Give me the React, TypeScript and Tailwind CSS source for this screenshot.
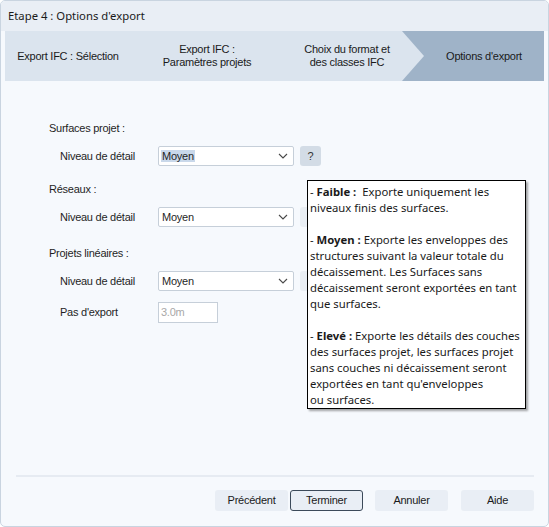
import React from "react";

const sans = "font-['Liberation_Sans',Arial,sans-serif] text-[11px] tracking-[-0.25px]";
const ui = "font-['Noto_Sans','Open_Sans',sans-serif] text-[11.3px] tracking-normal";

const Chevron: React.FC = () => (
    <svg width="10" height="6" viewBox="0 0 10 6" className="shrink-0">
        <path d="M1 1l4 4 4-4" fill="none" stroke="#4a4a4a" strokeWidth="1.1" />
    </svg>
);

const DetailRow: React.FC<{ highlighted?: boolean; faded?: boolean }> = ({ highlighted, faded }) => (
    <div className="flex items-center h-[20px] pl-[59px]">
        <span className="w-[98px] text-[#1f1f1f]">Niveau de détail</span>
        <div className="w-[136px] h-[20px] bg-white border border-[#c6cfd9] rounded-[2px] flex items-center pl-[2px] pr-[5px]">
            <span className={`flex-1 text-[#1f1f1f] ${highlighted ? "" : "pl-[1px]"}`}>
                {highlighted ? <span className="bg-[#c9d8ea] px-[1px]">Moyen</span> : "Moyen"}
            </span>
            <Chevron />
        </div>
        {/* Help button (hidden under the tooltip on the lower rows) */}
        <div
            className={`ml-[6px] w-[21px] h-[20px] rounded-[3px] flex items-center justify-center ${
                faded ? "bg-[#e9eef4]" : "bg-[#d3dce6] text-[#333]"
            }`}
        >
            {!faded && "?"}
        </div>
    </div>
);

export default function App() {
    return (
        <div className={`relative w-[549px] h-[527px] bg-[#f6f9fd] border border-[#c9d4e0] rounded-[5px] flex flex-col overflow-hidden ${sans}`}>
            {/* Title */}
            <div className={`h-[30px] shrink-0 bg-[#e9eef5] flex items-center pl-[7px] pt-[1px] text-[#1a1a1a] ${ui}`}>
                Etape 4 : Options d'export
            </div>

            {/* Wizard steps */}
            <div className="mx-[4px] h-[50px] shrink-0 bg-[#9fb3c8] flex text-[#1a1a1a] leading-[13px]">
                <div className="w-[419px] h-full bg-[#dbe4ee] flex items-center [clip-path:polygon(0_0,calc(100%-22px)_0,100%_50%,calc(100%-22px)_100%,0_100%)]">
                    <div className="w-[126px] text-center">Export IFC : Sélection</div>
                    <div className="w-[152px] text-center">
                        Export IFC :<br />Paramètres projets
                    </div>
                    <div className="w-[128px] text-center">
                        Choix du format et<br />des classes IFC
                    </div>
                </div>
                <div className="flex-1 flex items-center justify-center">Options d'export</div>
            </div>

            {/* Body */}
            <div className="flex-1 text-[#1f1f1f]">
                <div className="mt-[39px] pl-[48px] leading-[16px]">Surfaces projet :</div>
                <div className="mt-[10px]">
                    <DetailRow highlighted />
                </div>
                <div className="mt-[15px] pl-[48px] leading-[16px]">Réseaux :</div>
                <div className="mt-[10px]">
                    <DetailRow faded />
                </div>
                <div className="mt-[18px] pl-[48px] leading-[16px]">Projets linéaires :</div>
                <div className="mt-[10px]">
                    <DetailRow faded />
                </div>
                <div className="mt-[11px] flex items-center h-[21px] pl-[59px]">
                    <span className="w-[98px]">Pas d'export</span>
                    <div className="w-[60px] h-[21px] bg-white border border-[#c6cfd9] flex items-center pl-[2px] text-[#a8a8a8]">
                        3.0m
                    </div>
                </div>
            </div>

            {/* Footer */}
            <div className="shrink-0 pb-[15px]">
                <div className="ml-[15px] w-[518px] h-[2px] bg-[#e6ebf2]" />
                <div className="mt-[13px] flex justify-end pr-[14px] text-[#1a1a1a]">
                    <button className="w-[73px] h-[21px] bg-[#e9eef5] rounded-[3px]">Précédent</button>
                    <button className="ml-[2px] w-[73px] h-[21px] bg-[#e9eef5] rounded-[3px] border border-[#3c4a5a]">Terminer</button>
                    <button className="ml-[12px] w-[73px] h-[21px] bg-[#e9eef5] rounded-[3px]">Annuler</button>
                    <button className="ml-[13px] w-[73px] h-[21px] bg-[#e9eef5] rounded-[3px]">Aide</button>
                </div>
            </div>

            {/* Tooltip */}
            <div
                className={`absolute left-[306px] top-[179px] w-[219px] h-[229px] bg-white border border-black shadow-[2px_2px_2px_rgba(0,0,0,0.35)] pl-[2px] pt-[3px] leading-[16px] text-[#1a1a1a] whitespace-nowrap ${ui}`}
            >
                <div>- <b>Faible :</b>&nbsp; Exporte uniquement les</div>
                <div>niveaux finis des surfaces.</div>
                <div>&nbsp;</div>
                <div>- <b>Moyen :</b> Exporte les enveloppes des</div>
                <div>structures suivant la valeur totale du</div>
                <div>décaissement. Les Surfaces sans</div>
                <div>décaissement seront exportées en tant</div>
                <div>que surfaces.</div>
                <div>&nbsp;</div>
                <div>- <b>Elevé :</b> Exporte les détails des couches</div>
                <div>des surfaces projet, les surfaces projet</div>
                <div>sans couches ni décaissement seront</div>
                <div>exportées en tant qu'enveloppes</div>
                <div>ou surfaces.</div>
            </div>
        </div>
    );
}
